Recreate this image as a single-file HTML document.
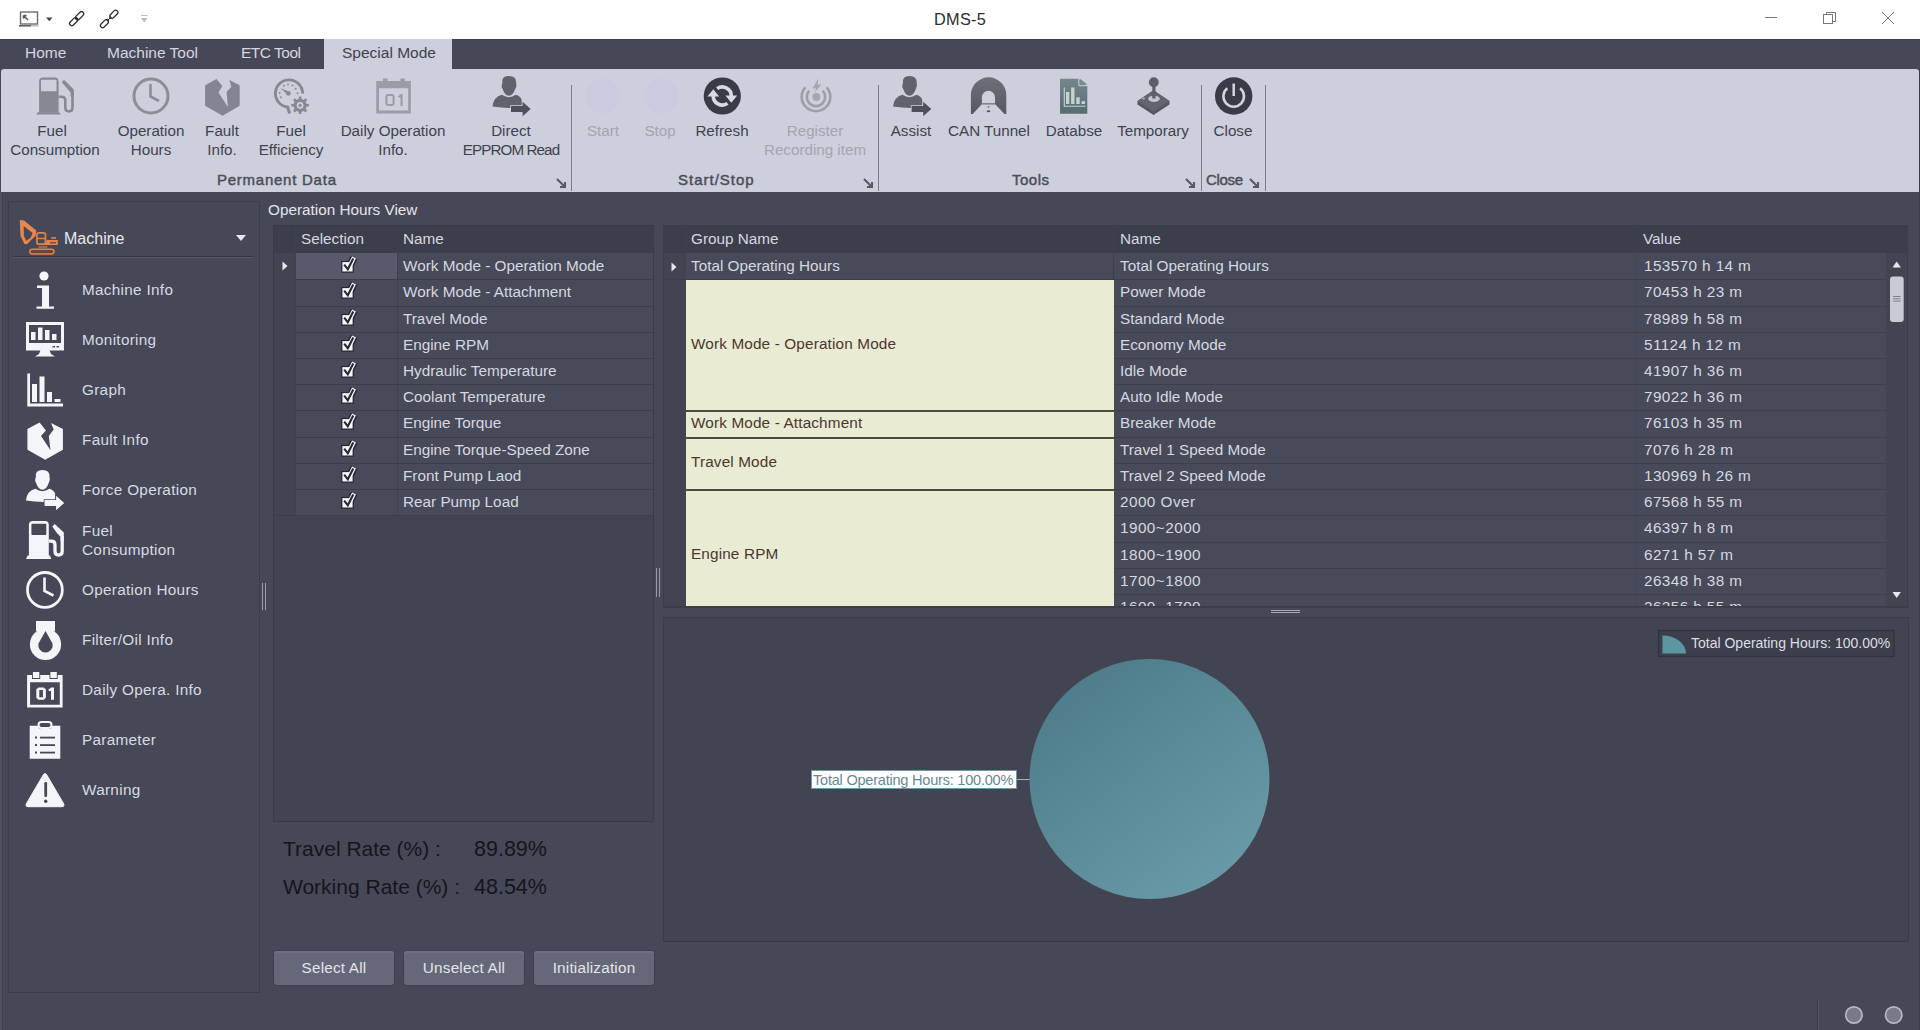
<!DOCTYPE html>
<html><head><meta charset="utf-8">
<style>
*{margin:0;padding:0;box-sizing:border-box}
html,body{width:1920px;height:1030px;overflow:hidden;background:#464857;font-family:"Liberation Sans",sans-serif;color:#e3e5ec}
.a{position:absolute}
#title{left:0;top:0;width:1920px;height:39px;background:#fff}
#tabs{left:0;top:39px;width:1920px;height:30px;background:#474857;border-top:1px solid #3e3f4c}
.tab{position:absolute;top:38px;height:30px;line-height:30px;font-size:15.5px;color:#d5d7e0;white-space:nowrap}
#ribbon{left:1px;top:69px;width:1918px;height:123px;background:#cdcfdc;border-radius:3px 3px 0 0}
.rb{position:absolute;text-align:center;font-size:15.2px;line-height:19px;color:#40424e;white-space:nowrap}
.rb.dis{color:#a3a5b2}
.gl{position:absolute;top:171px;font-size:15px;font-weight:normal;-webkit-text-stroke:0.45px #4b4d59;color:#4b4d59;white-space:nowrap}
.sep{position:absolute;top:85px;width:1px;height:106px;background:#7a7c88}
.lnch{position:absolute;top:176px;width:10px;height:10px}
.tx{font-size:15.3px;line-height:22px;color:#d6d8e0;white-space:nowrap}
.ty{font-size:15.3px;line-height:22px;color:#4d3630;white-space:nowrap;letter-spacing:0.15px}
.btn{width:120px;height:34px;background:#656879;border-radius:3px;box-shadow:0 0 0 1px #3f4150, inset 0 2px 0 #6d7084;text-align:center;line-height:34px;font-size:15.3px;color:#e3e5ec;letter-spacing:0.2px}
</style></head><body>
<div id="title" class="a"></div>
<div id="tabs" class="a"></div>
<div class="tab" style="left:25px">Home</div>
<div class="tab" style="left:107px">Machine Tool</div>
<div class="tab" style="left:241px;letter-spacing:-0.5px">ETC Tool</div>
<div class="a" style="left:324px;top:39px;width:128px;height:31px;background:#cdcfdc"></div>
<div class="tab" style="left:342px;color:#40424e">Special Mode</div>
<div id="ribbon" class="a"></div>

<!-- title bar icons -->
<svg class="a" style="left:0;top:0" width="200" height="38">
 <rect x="20.5" y="12" width="17" height="12" fill="none" stroke="#6d6d6d" stroke-width="1.4"/>
 <path d="M23.5 15.5 L28 20 M23.5 15.5 l0 3 M23.5 15.5 l3 0" stroke="#555" stroke-width="1.5" fill="none"/>
 <path d="M19 25.8 H31" stroke="#555" stroke-width="1.5"/><path d="M31 25.8 H38.5" stroke="#bbb" stroke-width="1.5"/>
 <path d="M46 17.5 L52.5 17.5 L49.25 21.2 Z" fill="#444"/>
 <g fill="none" stroke="#2a2a2a" stroke-width="1.25">
  <rect x="77.5" y="10.85" width="4.4" height="9.5" rx="2.2" transform="rotate(45 79.7 15.6)"/>
  <rect x="71.4" y="16.95" width="4.4" height="9.5" rx="2.2" transform="rotate(45 73.6 21.7)"/>
  <rect x="111.7" y="9.45" width="4.4" height="9.5" rx="2.2" transform="rotate(45 113.9 14.2)"/>
  <rect x="102.2" y="18.95" width="4.4" height="9.5" rx="2.2" transform="rotate(45 104.4 23.7)"/>
  <path d="M107.5 20.6 L110.8 17.3" stroke-width="1"/>
 </g>
 <path d="M76.6 17 L78.4 18.8 L76.6 20.6 L74.8 18.8 Z" fill="#2a2a2a"/>
 <path d="M110.3 16 L112 17.7 L110.6 19.1 L108.9 17.4 Z" fill="#3a3a3a"/>
 <path d="M107.7 18.6 L109.4 20.3 L108 21.7 L106.3 20 Z" fill="#3a3a3a"/>

 <path d="M141 15.5 H147.5" stroke="#bbb" stroke-width="1"/>
 <path d="M141 18 L147.5 18 L144.25 22.5 Z" fill="#bbb"/>
</svg>
<div class="a" style="left:934px;top:0;height:39px;line-height:39px;font-size:16.3px;color:#2e2e2e;letter-spacing:0.3px">DMS-5</div>
<svg class="a" style="left:1750px;top:0" width="170" height="38" fill="none" stroke="#777" stroke-width="1">
 <path d="M15 17.5 H27"/>
 <rect x="73.5" y="14.5" width="9" height="9"/>
 <path d="M76.5 14.5 V12.5 H85.5 V21.5 H82.5"/>
 <path d="M132 12 L144 24 M144 12 L132 24"/>
</svg>

<!-- ribbon separators -->
<div class="sep" style="left:571px"></div>
<div class="sep" style="left:878px"></div>
<div class="sep" style="left:1201px"></div>
<div class="sep" style="left:1265px"></div>

<!-- ribbon icons -->
<svg class="a" style="left:0;top:68px" width="1300" height="60">
 <!-- fuel pump -->
 <path fill-rule="evenodd" d="M39.1 13.5 Q39.1 9.6 43 9.6 H54.7 Q58.6 9.6 58.6 13.5 V44.6 H39.1 Z M41 11.7 V23.2 H56.5 V11.7 Z" fill="#868894"/>
 <path d="M37.8 44.2 H59.2 L60.8 46.6 H36.2 Z" fill="#868894"/>
 <path d="M58.6 28.8 H61.5 Q65.3 28.8 65.3 32.6 V39.5 Q65.3 43.4 69 43.4 Q72.5 43.4 72.5 39.5 V24" fill="none" stroke="#868894" stroke-width="2.6"/>
 <path d="M61.8 14.2 L64 11.8 L73.8 21.6 V28.5 H70.6 V24.6 Z" fill="#868894"/>
 <!-- clock -->
 <circle cx="151" cy="28" r="17" fill="none" stroke="#8b8d99" stroke-width="3"/>
 <path d="M150.5 16 V28.5 L159 33" fill="none" stroke="#8b8d99" stroke-width="2.6"/>
 <!-- fault -->
 <path d="M205.1 17.2 L216.5 10.9 L222.3 18 L218.5 24.5 L227.9 39 L226.6 23.9 L231.3 18.7 L229.3 12 L239.7 17.2 V37.7 L222.6 47.8 L205.1 37.7 Z" fill="#838592"/>
 <!-- fuel efficiency gauge -->
 <path d="M302.6 25.5 A13.6 13.6 0 1 0 287.8 39" fill="none" stroke="#868894" stroke-width="2.9"/>
 <path d="M287.3 38 L289.6 45.5" stroke="#868894" stroke-width="3"/>
 <path d="M280.2 20 L288.8 23.6 L287.6 26.6 Z" fill="#868894"/>
 <circle cx="288.3" cy="25.3" r="2.4" fill="#868894"/>
 <g fill="#868894"><circle cx="279.6" cy="25" r="1"/><circle cx="281" cy="29.3" r="1"/><circle cx="284" cy="17.8" r="1"/><circle cx="288" cy="16.5" r="1"/><circle cx="292.5" cy="17.4" r="1"/><circle cx="295.7" cy="20.7" r="1"/><circle cx="297.5" cy="25.2" r="1"/></g>
 <g transform="translate(300.1 37.3)" fill="#868894">
  <circle r="6.6"/>
  <g stroke="#868894" stroke-width="2.6"><path d="M0 -8.8 V8.8 M-8.8 0 H8.8 M-6.2 -6.2 L6.2 6.2 M6.2 -6.2 L-6.2 6.2"/></g>
  <circle r="3.4" fill="#cdcfdc"/><circle r="1.6"/>
 </g>
 <!-- calendar -->
 <g fill="#9a9ca8">
  <path fill-rule="evenodd" d="M376.25 13.1 H410.85 V45.5 H376.25 Z M378.95 20.3 V42.6 H408.15 V20.3 Z"/>
  <rect x="383" y="10.5" width="4.6" height="4"/><rect x="400.4" y="10.5" width="4.4" height="4"/>
  <path d="M387 26 H393 L394.6 28 V36 L393 38 H387 L385.4 36 V28 Z M387.5 28 V36 H392.5 V28 Z" fill-rule="evenodd"/>
  <path d="M400.5 26 H402.6 V38 H400.5 V29.5 H398.2 V28 Q399.8 27.5 400.5 26 Z"/>
 </g>
 <!-- direct eprom user -->
<path d="M502.4 15 Q501.29999999999995 8 508.9 8 Q516.5 8 516.1 15 Q516.9 19 515.4 20.5 Q512.9 27.8 508.9 27.8 Q504.9 27.8 502.4 20.5 Q500.9 19 502.4 15 Z" fill="#60626e"/><path d="M492.4 38.5 Q493.4 29 501.9 26.8 Q508.9 31.5 515.9 26.8 Q521.4 28.5 521.9 33 V39 Q508.9 41 492.4 38.5 Z" fill="#60626e"/><path d="M511.0 38.1 H522.6 V33.8 L530.6999999999999 41 L522.6 48.2 V44.1 H511.0 Z" fill="#4e505c" stroke="#cdcfdc" stroke-width="1.6" paint-order="stroke"/>
 <!-- start stop faint -->
 <circle cx="603" cy="28" r="17" fill="#c9cbe0"/>
 <circle cx="661" cy="28" r="17" fill="#c9cbe0"/>
 <!-- refresh -->
 <circle cx="722.3" cy="28" r="18.6" fill="#393b49"/>
 <path d="M717.1 20.6 A9 9 0 0 1 731.3 28.5" fill="none" stroke="#d9dbe3" stroke-width="3.6"/>
 <path d="M725.4 27.6 L737.2 27.6 L731.3 34.8 Z" fill="#d9dbe3"/>
 <path d="M727.5 35.4 A9 9 0 0 1 713.3 27.5" fill="none" stroke="#d9dbe3" stroke-width="3.6"/>
 <path d="M707.4 28.4 L719.2 28.4 L713.3 21.2 Z" fill="#d9dbe3"/>
 <!-- register -->
 <g fill="none" stroke="#9c9ea8" stroke-width="2.6">
  <path d="M826.6 19.3 A14.3 14.3 0 1 1 805.4 19.3"/>
  <path d="M822.8 22.7 A9.2 9.2 0 1 1 809.2 22.7"/>
 </g>
 <circle cx="816.3" cy="29" r="3.9" fill="#a3a5b0"/>
 <path d="M818.3 10.5 L812.5 20.5 L816.2 20.2 L814.6 24.5 L821.5 16.5 L817.6 16.8 Z" fill="#a3a5b0"/>
 <!-- assist -->
<path d="M903.0 15 Q901.9 8 909.5 8 Q917.1 8 916.7 15 Q917.5 19 916.0 20.5 Q913.5 27.8 909.5 27.8 Q905.5 27.8 903.0 20.5 Q901.5 19 903.0 15 Z" fill="#60626e"/><path d="M893.0 38.5 Q894.0 29 902.5 26.8 Q909.5 31.5 916.5 26.8 Q922.0 28.5 922.5 33 V39 Q909.5 41 893.0 38.5 Z" fill="#60626e"/><path d="M911.6 38.1 H923.2 V33.8 L931.3 41 L923.2 48.2 V44.1 H911.6 Z" fill="#4e505c" stroke="#cdcfdc" stroke-width="1.6" paint-order="stroke"/>
 <!-- CAN tunnel -->
 <defs><linearGradient id="cg" x1="0" y1="0" x2="0" y2="1"><stop offset="0" stop-color="#6e7079"/><stop offset="1" stop-color="#555762"/></linearGradient>
 <linearGradient id="dg" x1="0" y1="0" x2="0" y2="1"><stop offset="0" stop-color="#76878c"/><stop offset="1" stop-color="#566c71"/></linearGradient></defs>
 <path d="M970.9 46.1 V27 A17.7 17.7 0 0 1 1006.3 27 V46.1 H1004.5 L995 35.9 V29.35 A6.55 6.55 0 0 0 981.9 29.35 V35.9 L972.8 46.1 Z" fill="url(#cg)"/>
 <path d="M981.9 35.9 H995" stroke="#555762" stroke-width="1"/>
 <ellipse cx="988.5" cy="38.9" rx="1.1" ry="0.7" fill="#555762"/><ellipse cx="988.5" cy="43.3" rx="1.9" ry="1" fill="#555762"/>
 <!-- database doc -->
 <path d="M1060 10.75 H1078.9 L1087.3 17.7 V45.8 H1060 Z" fill="url(#dg)"/>
 <path d="M1080.2 10.75 L1087.3 16.6 H1080.2 Z" fill="#7e8b90"/>
 <path d="M1078.9 10.75 V17.7 H1087.3" fill="none" stroke="#cdcfdc" stroke-width="1"/>
 <path d="M1064.3 19.5 V38.3 H1085.3" fill="none" stroke="#c8d0d3" stroke-width="1.1"/>
 <g fill="#c8d0d3"><rect x="1066" y="24" width="3.3" height="12"/><rect x="1071.1" y="19.5" width="3.4" height="16.5"/><rect x="1076.3" y="29.3" width="3.4" height="6.7"/><rect x="1081.5" y="33.2" width="3.5" height="2.8"/></g>
 <!-- joystick -->
 <path d="M1137.5 33 L1153.5 22.3 L1169.5 33 V36.5 L1153.5 47 L1137.5 36.5 Z" fill="#555762"/>
 <path d="M1137.5 33 L1153.5 22.3 L1169.5 33 L1153.5 43.5 Z" fill="#62646f"/>
 <ellipse cx="1154" cy="30.8" rx="5.8" ry="3.1" fill="#c2c4cf"/>
 <rect x="1152.3" y="13" width="3.2" height="17.5" fill="#5c5e6a"/>
 <circle cx="1153.8" cy="14.2" r="4.9" fill="#5c5e6a"/>
 <ellipse cx="1143.5" cy="30.5" rx="1.6" ry="1.1" fill="#a9abb6"/>
 <!-- close power -->
 <circle cx="1233.7" cy="28" r="18.7" fill="#393b49"/>
 <path d="M1227.3 20.3 A10.3 10.3 0 1 0 1240.1 20.3" fill="none" stroke="#d3d5de" stroke-width="2.5"/>
 <path d="M1233.7 15.5 V28" stroke="#d3d5de" stroke-width="2.5"/>
</svg>

<!-- ribbon labels -->
<div class="rb" style="left:5px;top:121px;width:100px"><span style="position:relative;left:-3px">Fuel</span><br>Consumption</div>
<div class="rb" style="left:111px;top:121px;width:80px">Operation<br>Hours</div>
<div class="rb" style="left:197px;top:121px;width:50px">Fault<br>Info.</div>
<div class="rb" style="left:251px;top:121px;width:80px">Fuel<br>Efficiency</div>
<div class="rb" style="left:333px;top:121px;width:120px">Daily Operation<br>Info.</div>
<div class="rb" style="left:456px;top:121px;width:110px">Direct<br><span style="letter-spacing:-0.9px">EPPROM Read</span></div>
<div class="rb dis" style="left:578px;top:121px;width:50px">Start</div>
<div class="rb dis" style="left:635px;top:121px;width:50px">Stop</div>
<div class="rb" style="left:690px;top:121px;width:64px">Refresh</div>
<div class="rb dis" style="left:755px;top:121px;width:120px">Register<br>Recording item</div>
<div class="rb" style="left:886px;top:121px;width:50px">Assist</div>
<div class="rb" style="left:944px;top:121px;width:90px">CAN Tunnel</div>
<div class="rb" style="left:1039px;top:121px;width:70px">Databse</div>
<div class="rb" style="left:1113px;top:121px;width:80px">Temporary</div>
<div class="rb" style="left:1208px;top:121px;width:50px">Close</div>

<div class="gl" style="left:217px;letter-spacing:0.75px">Permanent Data</div>
<div class="gl" style="left:678px;letter-spacing:1px">Start/Stop</div>
<div class="gl" style="left:1012px;letter-spacing:0.5px">Tools</div>
<div class="gl" style="left:1206px;letter-spacing:-0.3px">Close</div>
<svg class="a" style="left:1px;top:171px" width="1300" height="22" fill="none" stroke="#585a66" stroke-width="2.1">
 <path d="M556 8 L564 16 M564 11 V16 H559"/>
 <path d="M863 8 L871 16 M871 11 V16 H866"/>
 <path d="M1185 8 L1193 16 M1193 11 V16 H1188"/>
 <path d="M1249 8 L1257 16 M1257 11 V16 H1252"/>
</svg>


<!-- main left edge -->
<div class="a" style="left:0;top:192px;width:2px;height:838px;background:#4f5160"></div><div class="a" style="left:2px;top:192px;width:1px;height:838px;background:#3f4150"></div>
<!-- sidebar -->
<div class="a" style="left:8px;top:201px;width:252px;height:792px;border:1px solid #3b3d4a;background:#464857"></div>
<div class="a" style="left:14px;top:256px;width:240px;height:1px;background:#33353f"></div>
<div class="a" style="left:14px;top:257px;width:240px;height:1px;background:#54566a"></div>
<svg class="a" style="left:18px;top:218px" width="44" height="40">
 <path fill-rule="evenodd" d="M1.8 2 L6 2.5 L18.3 12.5 L17.5 18 L13 22 L9 26.3 L6.5 26 L2.5 18 Z M5.6 8 L14.6 15 L12.8 19.6 L8.4 23 L5.9 18 Z" fill="#e9874c"/>
 <rect x="18.9" y="14.8" width="8.6" height="11.4" rx="2" fill="none" stroke="#e3834a" stroke-width="1.7"/>
 <path d="M19.5 20.5 H27" stroke="#e3834a" stroke-width="1.4"/>
 <path d="M26.2 27 L29 22 H39.8 V27 Z" fill="#e5844a"/>
 <rect x="32" y="24" width="6" height="1.5" fill="#7b4a35"/>
 <rect x="33.1" y="19" width="4.9" height="1.9" fill="#c97a4c"/>
 <rect x="20.4" y="28.2" width="9" height="1.6" fill="#b86e45"/>
 <rect x="11.8" y="31.2" width="24.2" height="4.8" rx="2.4" fill="#6d4434" stroke="#e3834a" stroke-width="1.5"/>
</svg>
<div class="a" style="left:64px;top:229px;font-size:16px;line-height:20px;color:#e6e8ef">Machine</div>
<svg class="a" style="left:235px;top:233px" width="12" height="10"><path d="M1 2 H11 L6 8 Z" fill="#e6e8ef"/></svg>

<svg class="a" style="left:0;top:260px" width="80" height="560" fill="#f4f5f8">
 <!-- info y base 260 -->
 <circle cx="44" cy="16" r="4.6"/>
 <path d="M37 25.5 H49 V46.5 H54 V48.7 H36.5 V46.5 H42 V28 H37 Z"/>
 <!-- monitor (y 321.8-357) -> local 61.8 -->
 <path fill-rule="evenodd" d="M26 62 H64 V90.5 H26 Z M29 65 V83 H61 V65 Z"/>
 <path d="M40.5 90 H49.5 L51 94 L55 96.5 H35 L39 94 Z"/>
 <rect x="31" y="72" width="4.5" height="8"/><rect x="38" y="67.5" width="4.5" height="12.5"/><rect x="45" y="70" width="4.5" height="10"/><rect x="52" y="74" width="4.5" height="6"/>
 <rect x="52.5" y="86" width="2.5" height="1.4" fill="#464857"/><rect x="56.5" y="86" width="2.5" height="1.4" fill="#464857"/>
 <!-- graph y 373.6-406.4 -> local 113.6 -->
 <path d="M27.3 113.6 H30 V143.5 H63 V146.4 H27.3 Z"/>
 <rect x="32" y="124" width="5" height="18"/><rect x="39.5" y="116.5" width="5" height="25.5"/><rect x="47" y="132" width="5" height="10"/><rect x="54.5" y="139" width="6" height="3"/>
 <!-- fault hex 422-459.5 -> local 162 -->
 <path d="M27.4 169 L39.6 162.5 L45.9 170.5 L41 175.9 L50.4 189.9 L48.8 175.9 L53.7 169.6 L51 163.1 L62.9 169 V189.7 L45.2 199.8 L27.4 189.7 Z"/>
 <!-- user arrow -->
<path d="M35.9 217 Q34.8 210 42.4 210 Q50.0 210 49.6 217 Q50.4 221 48.9 222.5 Q46.4 229.8 42.4 229.8 Q38.4 229.8 35.9 222.5 Q34.4 221 35.9 217 Z" fill="#f4f5f8"/><path d="M25.9 240.5 Q26.9 231 35.4 228.8 Q42.4 233.5 49.4 228.8 Q54.9 230.5 55.4 235 V241 Q42.4 243 25.9 240.5 Z" fill="#f4f5f8"/><path d="M44.5 240.1 H56.099999999999994 V235.8 L64.2 243 L56.099999999999994 250.2 V246.1 H44.5 Z" fill="#f4f5f8" stroke="#464857" stroke-width="1.6" paint-order="stroke"/>
 <!-- fuel pump 522-559.3 -> local 262 -->
 <path fill-rule="evenodd" d="M28.9 265 Q28.9 261.1 32.8 261.1 H44.9 Q48.8 261.1 48.8 265 V296 H28.9 Z M32.4 263.8 Q31.4 263.8 31.4 264.8 V274 Q31.4 275 32.4 275 H45.3 Q46.3 275 46.3 274 V264.8 Q46.3 263.8 45.3 263.8 Z"/>
 <path d="M27.6 295.5 H50 L51.25 298.9 H26 Z"/>
 <path d="M48.8 281.2 H51.3 Q55 281.2 55 285 V291.3 Q55 295.1 58.6 295.1 Q62.2 295.1 62.2 291.3 V276" fill="none" stroke="#f4f5f8" stroke-width="3.3"/>
 <path d="M52.3 266.4 L54.7 263.9 L63.8 272.6 V281 H60.6 V276.8 L56.5 272.6 Z"/>
</svg>
<svg class="a" style="left:0;top:560px" width="80" height="260" fill="#f4f5f8">
 <!-- clock 571-608.7 center 589.9 -> local 29.9 -->
 <circle cx="44.9" cy="29.9" r="17.4" fill="none" stroke="#f4f5f8" stroke-width="2.8"/>
 <path d="M44.5 17.5 V31 L53.5 35.5" fill="none" stroke="#f4f5f8" stroke-width="2.6"/>
 <!-- filter oil 621 - 660 -> local 61 -->
 <rect x="36" y="61" width="19" height="10"/>
 <circle cx="45.5" cy="84.4" r="15.6"/>
 <path d="M45.5 71 Q41 79 38.5 83.5 A7.2 7.2 0 1 0 52.5 83.5 Q50 79 45.5 71 Z" fill="#464857"/>
 <!-- calendar 673-707 -> local 113 -->
 <path fill-rule="evenodd" d="M27.1 115 H62.6 V147.5 H27.1 Z M30.1 122.3 V144.8 H59.8 V122.3 Z"/>
 <rect x="32" y="111" width="8.2" height="8" fill="#464857"/><rect x="49.5" y="111" width="8.2" height="8" fill="#464857"/>
 <rect x="32.9" y="112" width="6.4" height="6"/><rect x="50.4" y="112" width="6.4" height="6"/>
 <path fill-rule="evenodd" d="M38.3 127.4 H43.9 L45.9 129.4 V137.8 L43.9 139.8 H38.3 L36.3 137.8 V129.4 Z M39.3 129.9 V137.3 H42.9 V129.9 Z"/>
 <path d="M51 127.4 H54 V139.8 H51 V131 H48.7 V129 Q50.3 128.8 51 127.4 Z"/>
 <!-- clipboard 721-758.7 -> local 161 -->
 <path d="M29.7 165.7 H38 Q38 169 41 169 H49 Q52 169 52 165.7 H60.3 V198.7 H29.7 Z"/>
 <rect x="38.5" y="162" width="13" height="6" rx="3" fill="none" stroke="#f4f5f8" stroke-width="2"/>
 <g fill="#464857"><rect x="35" y="176.5" width="2" height="2"/><rect x="40" y="176.7" width="15" height="1.8"/><rect x="35" y="184" width="2" height="2"/><rect x="40" y="184.2" width="15" height="1.8"/><rect x="35" y="191.5" width="2" height="2"/><rect x="40" y="191.7" width="15" height="1.8"/></g>
 <!-- warning 773.3-806.7 -> local 213.3 -->
 <path d="M43.5 214.5 Q45 212.5 46.5 214.5 L63.8 244 Q64.8 246.7 62 246.7 H28 Q25.2 246.7 26.2 244 Z" stroke="#f4f5f8" stroke-width="1" stroke-linejoin="round"/>
 <rect x="44.3" y="222" width="2.8" height="15" rx="1.2" fill="#464857"/>
 <circle cx="45.7" cy="241.2" r="1.7" fill="#464857"/>
</svg>
<div class="a" style="left:82px;top:280px;font-size:15.3px;line-height:20px;color:#d8dae2;letter-spacing:0.3px;white-space:nowrap">Machine Info</div>
<div class="a" style="left:82px;top:330px;font-size:15.3px;line-height:20px;color:#d8dae2;letter-spacing:0.3px">Monitoring</div>
<div class="a" style="left:82px;top:380px;font-size:15.3px;line-height:20px;color:#d8dae2;letter-spacing:0.3px">Graph</div>
<div class="a" style="left:82px;top:430px;font-size:15.3px;line-height:20px;color:#d8dae2;letter-spacing:0.3px;white-space:nowrap">Fault Info</div>
<div class="a" style="left:82px;top:480px;font-size:15.3px;line-height:20px;color:#d8dae2;letter-spacing:0.3px;white-space:nowrap">Force Operation</div>
<div class="a" style="left:82px;top:521px;font-size:15.3px;line-height:19px;color:#d8dae2;letter-spacing:0.3px">Fuel<br>Consumption</div>
<div class="a" style="left:82px;top:580px;font-size:15.3px;line-height:20px;color:#d8dae2;letter-spacing:0.3px;white-space:nowrap">Operation Hours</div>
<div class="a" style="left:82px;top:630px;font-size:15.3px;line-height:20px;color:#d8dae2;letter-spacing:0.3px;white-space:nowrap">Filter/Oil Info</div>
<div class="a" style="left:82px;top:680px;font-size:15.3px;line-height:20px;color:#d8dae2;letter-spacing:0.3px;white-space:nowrap">Daily Opera. Info</div>
<div class="a" style="left:82px;top:730px;font-size:15.3px;line-height:20px;color:#d8dae2;letter-spacing:0.3px">Parameter</div>
<div class="a" style="left:82px;top:780px;font-size:15.3px;line-height:20px;color:#d8dae2;letter-spacing:0.3px">Warning</div>
<!-- splitter handles -->
<div class="a" style="left:262px;top:583px;width:1px;height:27px;background:#9a9cab"></div>
<div class="a" style="left:265px;top:583px;width:1px;height:27px;background:#9a9cab"></div>
<div class="a" style="left:656px;top:568px;width:1px;height:29px;background:#9a9cab"></div>
<div class="a" style="left:659px;top:568px;width:1px;height:29px;background:#9a9cab"></div>

<div class="a" style="left:268px;top:200px;font-size:15.3px;line-height:20px;color:#e3e5ec;white-space:nowrap">Operation Hours View</div>
<div class="a" style="left:273px;top:225px;width:381px;height:597px;background:#424453;border:1px solid #393b47"></div>
<div class="a" style="left:274px;top:226px;width:379px;height:27px;background:#3c3e4b"></div>
<div class="a" style="left:274px;top:253px;width:22px;height:262px;background:#424451"></div>
<div class="a" style="left:296px;top:253px;width:357px;height:262px;background:#474a59"></div>
<div class="a" style="left:296px;top:253px;width:102px;height:26px;background:#565a6a"></div>
<div class="a" style="left:397px;top:226px;width:1px;height:289px;background:#3f4150"></div>
<div class="a" style="left:295px;top:226px;width:1px;height:289px;background:#3f4150"></div>
<div class="a" style="left:296px;top:279px;width:357px;height:1px;background:#3b3d4a"></div>
<div class="a" style="left:296px;top:306px;width:357px;height:1px;background:#3b3d4a"></div>
<div class="a" style="left:296px;top:332px;width:357px;height:1px;background:#3b3d4a"></div>
<div class="a" style="left:296px;top:358px;width:357px;height:1px;background:#3b3d4a"></div>
<div class="a" style="left:296px;top:384px;width:357px;height:1px;background:#3b3d4a"></div>
<div class="a" style="left:296px;top:410px;width:357px;height:1px;background:#3b3d4a"></div>
<div class="a" style="left:296px;top:437px;width:357px;height:1px;background:#3b3d4a"></div>
<div class="a" style="left:296px;top:463px;width:357px;height:1px;background:#3b3d4a"></div>
<div class="a" style="left:296px;top:489px;width:357px;height:1px;background:#3b3d4a"></div>
<div class="a" style="left:296px;top:515px;width:357px;height:1px;background:#3b3d4a"></div>
<div class="a" style="left:274px;top:515px;width:379px;height:1px;background:#3b3d4a"></div>
<div class="a tx" style="left:301px;top:228px">Selection</div>
<div class="a tx" style="left:403px;top:228px">Name</div>
<svg class="a" style="left:281px;top:260px" width="8" height="12"><path d="M1.5 1.5 L6.5 6 L1.5 10.5 Z" fill="#e6e8ef"/></svg>
<div class="a tx" style="left:403px;top:255px">Work Mode - Operation Mode</div>
<svg class="a" style="left:339px;top:256px" width="20" height="20"><path d="M9.2 13 L15 1.6" stroke="#262832" stroke-width="7.4"/><rect x="2.2" y="4.9" width="12.6" height="11.8" fill="#262832"/><path d="M9.2 13 L15 1.6" stroke="#f4f5f8" stroke-width="4.4"/><rect x="3.4" y="6.1" width="10.2" height="9.4" fill="#f4f5f8"/><path d="M5.2 8.6 L8.8 13.3 L14.3 2.6" fill="none" stroke="#262832" stroke-width="2.1"/></svg>
<div class="a tx" style="left:403px;top:281px">Work Mode - Attachment</div>
<svg class="a" style="left:339px;top:282px" width="20" height="20"><path d="M9.2 13 L15 1.6" stroke="#262832" stroke-width="7.4"/><rect x="2.2" y="4.9" width="12.6" height="11.8" fill="#262832"/><path d="M9.2 13 L15 1.6" stroke="#f4f5f8" stroke-width="4.4"/><rect x="3.4" y="6.1" width="10.2" height="9.4" fill="#f4f5f8"/><path d="M5.2 8.6 L8.8 13.3 L14.3 2.6" fill="none" stroke="#262832" stroke-width="2.1"/></svg>
<div class="a tx" style="left:403px;top:308px">Travel Mode</div>
<svg class="a" style="left:339px;top:309px" width="20" height="20"><path d="M9.2 13 L15 1.6" stroke="#262832" stroke-width="7.4"/><rect x="2.2" y="4.9" width="12.6" height="11.8" fill="#262832"/><path d="M9.2 13 L15 1.6" stroke="#f4f5f8" stroke-width="4.4"/><rect x="3.4" y="6.1" width="10.2" height="9.4" fill="#f4f5f8"/><path d="M5.2 8.6 L8.8 13.3 L14.3 2.6" fill="none" stroke="#262832" stroke-width="2.1"/></svg>
<div class="a tx" style="left:403px;top:334px">Engine RPM</div>
<svg class="a" style="left:339px;top:335px" width="20" height="20"><path d="M9.2 13 L15 1.6" stroke="#262832" stroke-width="7.4"/><rect x="2.2" y="4.9" width="12.6" height="11.8" fill="#262832"/><path d="M9.2 13 L15 1.6" stroke="#f4f5f8" stroke-width="4.4"/><rect x="3.4" y="6.1" width="10.2" height="9.4" fill="#f4f5f8"/><path d="M5.2 8.6 L8.8 13.3 L14.3 2.6" fill="none" stroke="#262832" stroke-width="2.1"/></svg>
<div class="a tx" style="left:403px;top:360px">Hydraulic Temperature</div>
<svg class="a" style="left:339px;top:361px" width="20" height="20"><path d="M9.2 13 L15 1.6" stroke="#262832" stroke-width="7.4"/><rect x="2.2" y="4.9" width="12.6" height="11.8" fill="#262832"/><path d="M9.2 13 L15 1.6" stroke="#f4f5f8" stroke-width="4.4"/><rect x="3.4" y="6.1" width="10.2" height="9.4" fill="#f4f5f8"/><path d="M5.2 8.6 L8.8 13.3 L14.3 2.6" fill="none" stroke="#262832" stroke-width="2.1"/></svg>
<div class="a tx" style="left:403px;top:386px">Coolant Temperature</div>
<svg class="a" style="left:339px;top:387px" width="20" height="20"><path d="M9.2 13 L15 1.6" stroke="#262832" stroke-width="7.4"/><rect x="2.2" y="4.9" width="12.6" height="11.8" fill="#262832"/><path d="M9.2 13 L15 1.6" stroke="#f4f5f8" stroke-width="4.4"/><rect x="3.4" y="6.1" width="10.2" height="9.4" fill="#f4f5f8"/><path d="M5.2 8.6 L8.8 13.3 L14.3 2.6" fill="none" stroke="#262832" stroke-width="2.1"/></svg>
<div class="a tx" style="left:403px;top:412px">Engine Torque</div>
<svg class="a" style="left:339px;top:413px" width="20" height="20"><path d="M9.2 13 L15 1.6" stroke="#262832" stroke-width="7.4"/><rect x="2.2" y="4.9" width="12.6" height="11.8" fill="#262832"/><path d="M9.2 13 L15 1.6" stroke="#f4f5f8" stroke-width="4.4"/><rect x="3.4" y="6.1" width="10.2" height="9.4" fill="#f4f5f8"/><path d="M5.2 8.6 L8.8 13.3 L14.3 2.6" fill="none" stroke="#262832" stroke-width="2.1"/></svg>
<div class="a tx" style="left:403px;top:439px">Engine Torque-Speed Zone</div>
<svg class="a" style="left:339px;top:440px" width="20" height="20"><path d="M9.2 13 L15 1.6" stroke="#262832" stroke-width="7.4"/><rect x="2.2" y="4.9" width="12.6" height="11.8" fill="#262832"/><path d="M9.2 13 L15 1.6" stroke="#f4f5f8" stroke-width="4.4"/><rect x="3.4" y="6.1" width="10.2" height="9.4" fill="#f4f5f8"/><path d="M5.2 8.6 L8.8 13.3 L14.3 2.6" fill="none" stroke="#262832" stroke-width="2.1"/></svg>
<div class="a tx" style="left:403px;top:465px">Front Pump Laod</div>
<svg class="a" style="left:339px;top:466px" width="20" height="20"><path d="M9.2 13 L15 1.6" stroke="#262832" stroke-width="7.4"/><rect x="2.2" y="4.9" width="12.6" height="11.8" fill="#262832"/><path d="M9.2 13 L15 1.6" stroke="#f4f5f8" stroke-width="4.4"/><rect x="3.4" y="6.1" width="10.2" height="9.4" fill="#f4f5f8"/><path d="M5.2 8.6 L8.8 13.3 L14.3 2.6" fill="none" stroke="#262832" stroke-width="2.1"/></svg>
<div class="a tx" style="left:403px;top:491px">Rear Pump Load</div>
<svg class="a" style="left:339px;top:492px" width="20" height="20"><path d="M9.2 13 L15 1.6" stroke="#262832" stroke-width="7.4"/><rect x="2.2" y="4.9" width="12.6" height="11.8" fill="#262832"/><path d="M9.2 13 L15 1.6" stroke="#f4f5f8" stroke-width="4.4"/><rect x="3.4" y="6.1" width="10.2" height="9.4" fill="#f4f5f8"/><path d="M5.2 8.6 L8.8 13.3 L14.3 2.6" fill="none" stroke="#262832" stroke-width="2.1"/></svg>
<div class="a" style="left:283px;top:836px;font-size:21px;line-height:26px;color:#14151b;white-space:nowrap">Travel Rate (%) :</div>
<div class="a" style="left:474px;top:836px;font-size:21.5px;line-height:26px;color:#14151b;white-space:nowrap">89.89%</div>
<div class="a" style="left:283px;top:874px;font-size:21px;line-height:26px;color:#14151b;white-space:nowrap">Working Rate (%) :</div>
<div class="a" style="left:474px;top:874px;font-size:21.5px;line-height:26px;color:#14151b;white-space:nowrap">48.54%</div>
<div class="a btn" style="left:274px;top:951px">Select All</div>
<div class="a btn" style="left:404px;top:951px">Unselect All</div>
<div class="a btn" style="left:534px;top:951px">Initialization</div>
<div class="a" style="left:663px;top:225px;width:1245px;height:382px;background:#474a59;border:1px solid #3a3c48"></div>
<div class="a" style="left:664px;top:226px;width:1243px;height:27px;background:#3c3e4b"></div>
<div class="a" style="left:664px;top:253px;width:22px;height:353px;background:#424451"></div>
<div class="a" style="left:1886px;top:253px;width:21px;height:353px;background:#424451"></div>
<div class="a" style="left:686px;top:226px;width:1px;height:27px;background:#3f4150"></div>
<div class="a" style="left:1113px;top:226px;width:1px;height:27px;background:#3f4150"></div>
<div class="a" style="left:1637px;top:226px;width:1px;height:27px;background:#3f4150"></div>
<div class="a" style="left:1636px;top:253px;width:1px;height:353px;background:#444756"></div><div class="a" style="left:1113px;top:253px;width:1px;height:26px;background:#3d3f4c"></div>
<div class="a" style="left:1114px;top:279px;width:772px;height:1px;background:#3d3f4c"></div>
<div class="a" style="left:1114px;top:306px;width:772px;height:1px;background:#3d3f4c"></div>
<div class="a" style="left:1114px;top:332px;width:772px;height:1px;background:#3d3f4c"></div>
<div class="a" style="left:1114px;top:358px;width:772px;height:1px;background:#3d3f4c"></div>
<div class="a" style="left:1114px;top:384px;width:772px;height:1px;background:#3d3f4c"></div>
<div class="a" style="left:1114px;top:410px;width:772px;height:1px;background:#3d3f4c"></div>
<div class="a" style="left:1114px;top:437px;width:772px;height:1px;background:#3d3f4c"></div>
<div class="a" style="left:1114px;top:463px;width:772px;height:1px;background:#3d3f4c"></div>
<div class="a" style="left:1114px;top:489px;width:772px;height:1px;background:#3d3f4c"></div>
<div class="a" style="left:1114px;top:515px;width:772px;height:1px;background:#3d3f4c"></div>
<div class="a" style="left:1114px;top:542px;width:772px;height:1px;background:#3d3f4c"></div>
<div class="a" style="left:1114px;top:568px;width:772px;height:1px;background:#3d3f4c"></div>
<div class="a" style="left:1114px;top:594px;width:772px;height:1px;background:#3d3f4c"></div>
<div class="a" style="left:686px;top:279px;width:1px;height:1px;background:#3d3f4c"></div>
<div class="a" style="left:664px;top:279px;width:450px;height:1px;background:#3d3f4c"></div>
<div class="a" style="left:686px;top:280px;width:428px;height:326px;background:#e9ebd3"></div>
<div class="a" style="left:686px;top:410px;width:428px;height:1.5px;background:#4a4b44"></div>
<div class="a" style="left:686px;top:437px;width:428px;height:1.5px;background:#4a4b44"></div>
<div class="a" style="left:686px;top:489px;width:428px;height:1.5px;background:#4a4b44"></div>
<div class="a ty" style="left:691px;top:333px">Work Mode - Operation Mode</div>
<div class="a ty" style="left:691px;top:412px">Work Mode - Attachment</div>
<div class="a ty" style="left:691px;top:451px">Travel Mode</div>
<div class="a ty" style="left:691px;top:543px">Engine RPM</div>
<div class="a tx" style="left:691px;top:228px">Group Name</div>
<div class="a tx" style="left:1120px;top:228px">Name</div>
<div class="a tx" style="left:1643px;top:228px">Value</div>
<div class="a tx" style="left:691px;top:255px">Total Operating Hours</div>
<svg class="a" style="left:670px;top:261px" width="8" height="12"><path d="M1.5 1.5 L6.5 6 L1.5 10.5 Z" fill="#e6e8ef"/></svg>
<div class="a" style="left:1114px;top:253px;width:772px;height:353px;overflow:hidden">
<div class="a tx" style="left:6px;top:2px">Total Operating Hours</div><div class="a tx" style="letter-spacing:0.4px;left:530px;top:2px">153570 h 14 m</div>
<div class="a tx" style="left:6px;top:28px">Power Mode</div><div class="a tx" style="letter-spacing:0.4px;left:530px;top:28px">70453 h 23 m</div>
<div class="a tx" style="left:6px;top:55px">Standard Mode</div><div class="a tx" style="letter-spacing:0.4px;left:530px;top:55px">78989 h 58 m</div>
<div class="a tx" style="left:6px;top:81px">Economy Mode</div><div class="a tx" style="letter-spacing:0.4px;left:530px;top:81px">51124 h 12 m</div>
<div class="a tx" style="left:6px;top:107px">Idle Mode</div><div class="a tx" style="letter-spacing:0.4px;left:530px;top:107px">41907 h 36 m</div>
<div class="a tx" style="left:6px;top:133px">Auto Idle Mode</div><div class="a tx" style="letter-spacing:0.4px;left:530px;top:133px">79022 h 36 m</div>
<div class="a tx" style="left:6px;top:159px">Breaker Mode</div><div class="a tx" style="letter-spacing:0.4px;left:530px;top:159px">76103 h 35 m</div>
<div class="a tx" style="left:6px;top:186px">Travel 1 Speed Mode</div><div class="a tx" style="letter-spacing:0.4px;left:530px;top:186px">7076 h 28 m</div>
<div class="a tx" style="left:6px;top:212px">Travel 2 Speed Mode</div><div class="a tx" style="letter-spacing:0.4px;left:530px;top:212px">130969 h 26 m</div>
<div class="a tx" style="letter-spacing:0.45px;left:6px;top:238px">2000 Over</div><div class="a tx" style="letter-spacing:0.4px;left:530px;top:238px">67568 h 55 m</div>
<div class="a tx" style="letter-spacing:0.45px;left:6px;top:264px">1900~2000</div><div class="a tx" style="letter-spacing:0.4px;left:530px;top:264px">46397 h 8 m</div>
<div class="a tx" style="letter-spacing:0.45px;left:6px;top:291px">1800~1900</div><div class="a tx" style="letter-spacing:0.4px;left:530px;top:291px">6271 h 57 m</div>
<div class="a tx" style="letter-spacing:0.45px;left:6px;top:317px">1700~1800</div><div class="a tx" style="letter-spacing:0.4px;left:530px;top:317px">26348 h 38 m</div>
<div class="a tx" style="letter-spacing:0.45px;left:6px;top:343px">1600~1700</div><div class="a tx" style="letter-spacing:0.4px;left:530px;top:343px">26256 h 55 m</div>
</div>
<svg class="a" style="left:1886px;top:253px" width="21" height="353"><path d="M6.5 14.5 L10.7 8.5 L14.9 14.5 Z" fill="#e6e8ef"/><rect x="4" y="23.5" width="13.7" height="45.5" rx="3" fill="#c8cad6"/><path d="M7 43.5 H14.5 M7 45.8 H14.5 M7 48.1 H14.5" stroke="#7d7f8b" stroke-width="1"/><path d="M6.5 339 L10.7 345 L14.9 339 Z" fill="#e6e8ef"/></svg>
<div class="a" style="left:663px;top:607px;width:1246px;height:1px;background:#3c3e4a"></div>
<div class="a" style="left:1271px;top:610px;width:29px;height:1px;background:#a7a9b6"></div>
<div class="a" style="left:1271px;top:612px;width:29px;height:1px;background:#a7a9b6"></div>
<div class="a" style="left:663px;top:617px;width:1246px;height:325px;background:#424452;border:1px solid #393b47"></div>
<svg class="a" style="left:663px;top:617px" width="1246" height="325">
 <defs><linearGradient id="pg" x1="0.2" y1="0.1" x2="0.85" y2="0.95"><stop offset="0" stop-color="#4f7d8b"/><stop offset="1" stop-color="#6a9ba8"/></linearGradient>
 <linearGradient id="lg" x1="0" y1="0" x2="1" y2="1"><stop offset="0" stop-color="#4f7d8b"/><stop offset="1" stop-color="#6a9ba8"/></linearGradient></defs>
 <circle cx="486.5" cy="162" r="120" fill="url(#pg)"/>
 <path d="M354 162.5 H366.5" stroke="#9fb8c0" stroke-width="1"/>
 <rect x="148.5" y="153.5" width="205" height="18" fill="#fff" stroke="#6d9aa6" stroke-width="1"/>
 <rect x="995.5" y="13.5" width="235.5" height="26" fill="#3d3f4c" stroke="#2f313c" stroke-width="1.2"/>
 <path d="M999.5 36.5 V18.5 A23.5 18 0 0 1 1023 36.5 Z" fill="#5c979f"/>
</svg>
<div class="a" style="left:813px;top:771px;font-size:14.6px;line-height:19px;color:#6a8892;white-space:nowrap;letter-spacing:-0.25px">Total Operating Hours: 100.00%</div>
<div class="a" style="left:1691px;top:634px;font-size:14px;line-height:18px;color:#dcdee6;white-space:nowrap;letter-spacing:0px">Total Operating Hours: 100.00%</div>
<div class="a" style="left:1817px;top:1000px;width:1px;height:30px;background:#363845"></div><div class="a" style="left:1818px;top:1000px;width:1px;height:30px;background:#575a69"></div>
<svg class="a" style="left:1840px;top:1000px" width="80" height="30"><circle cx="13.9" cy="15" r="8.2" fill="#777a89" stroke="#b5b7c3" stroke-width="1.7"/><circle cx="53.7" cy="15" r="8.2" fill="#777a89" stroke="#b5b7c3" stroke-width="1.7"/></svg>
<div class="a" style="left:1919px;top:69px;width:1px;height:961px;background:#3a3c48"></div>
</body></html>
